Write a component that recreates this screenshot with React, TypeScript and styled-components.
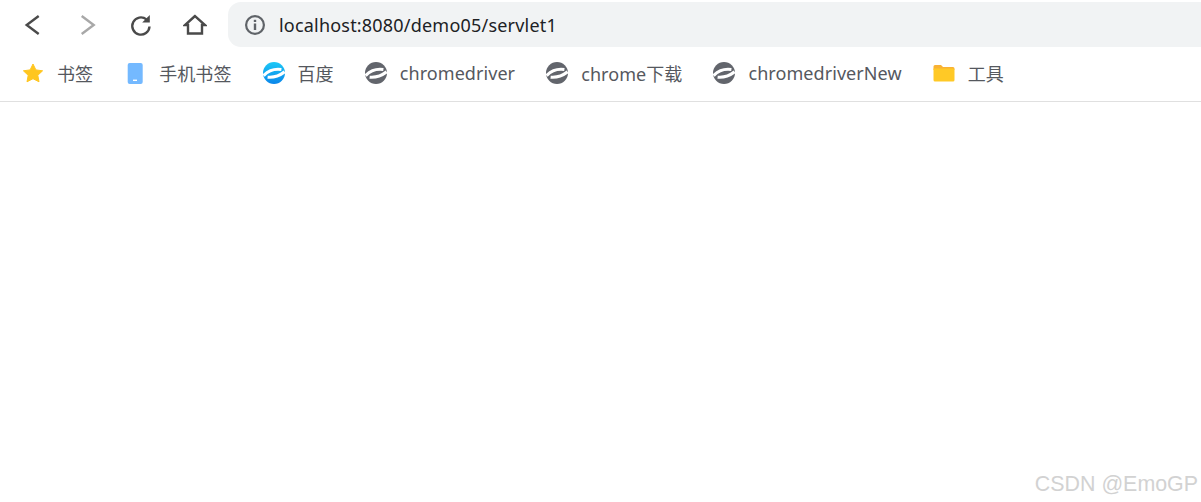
import {FC, ReactNode} from "react"
import styled, {createGlobalStyle} from "styled-components"

const GlobalStyle = createGlobalStyle`
  html, body {
    margin: 0;
    padding: 0;
    background: #fff;
  }
`

const Swoosh: FC<{ blue?: boolean }> = ({blue}) => {
	const id = "edge-blue"
	return <svg width="22" height="22" viewBox="0 0 22 22">
		{blue && <defs>
			<linearGradient id={id} x1="0" y1="0" x2="0" y2="1">
				<stop offset="0" stopColor="#1cc8f6"/>
				<stop offset="1" stopColor="#0a86ea"/>
			</linearGradient>
		</defs>}
		<circle cx="11" cy="11" r="11" fill={blue ? `url(#${id})` : "#62656c"}/>
		<path d="M0.6 13.6 C5 9 11 6.6 18.4 7.6" stroke="#fff" strokeWidth="3" fill="none"/>
		<path d="M21.6 9.8 C16.5 13.8 10.5 15.8 4.6 15.2" stroke="#fff" strokeWidth="3" fill="none"/>
	</svg>
}

const Star = () => <svg width="22" height="22" viewBox="0 0 22 22">
	<path d="M11 2 L13.9 7.9 L20.6 8.8 L15.8 13.3 L17 19.8 L11 16.7 L5 19.8 L6.2 13.3 L1.4 8.8 L8.1 7.9 Z"
		  fill="#ffc61f" stroke="#ffc61f" strokeWidth="1" strokeLinejoin="round"/>
</svg>

const Phone = () => <svg width="22" height="22" viewBox="0 0 22 22">
	<rect x="3.7" y="1" width="15" height="21" rx="2" fill="#74b9ff"/>
	<rect x="9" y="17.6" width="4" height="1.4" fill="#fff"/>
</svg>

const Folder = () => <svg width="22" height="22" viewBox="0 0 22 22">
	<path d="M0.5 4.5 Q0.5 3 2 3 H8 L10 5 H20 Q21.5 5 21.5 6.5 V8 H0.5 Z" fill="#f9b233"/>
	<path d="M0.5 6.5 H20 Q21.5 6.5 21.5 8 V18 Q21.5 19.5 20 19.5 H2 Q0.5 19.5 0.5 18 Z" fill="#ffc926"/>
</svg>

interface IBookmark {
	icon: ReactNode
	label: string
}

const bookmarks: IBookmark[] = [
	{icon: <Star/>, label: "书签"},
	{icon: <Phone/>, label: "手机书签"},
	{icon: <Swoosh blue/>, label: "百度"},
	{icon: <Swoosh/>, label: "chromedriver"},
	{icon: <Swoosh/>, label: "chrome下载"},
	{icon: <Swoosh/>, label: "chromedriverNew"},
	{icon: <Folder/>, label: "工具"},
]

const App: FC = () => {
	return <Page>
		<GlobalStyle/>
		<Toolbar>
			<NavButton>
				<svg width="24" height="24" viewBox="0 0 24 24"><path d="M17.7 3 L5.7 12 L17.7 21" /></svg>
			</NavButton>
			<NavButton $disabled>
				<svg width="24" height="24" viewBox="0 0 24 24"><path d="M6.7 3 L18.7 12 L6.7 21" /></svg>
			</NavButton>
			<NavButton>
				<svg width="24" height="24" viewBox="0 0 24 24">
					<path d="M20.5 13.5 A8.6 8.6 0 1 1 17.4 6.4"/>
					<path d="M20.8 2 V9.6 H13.2 Z" fill="#4a4a4a" stroke="none"/>
				</svg>
			</NavButton>
			<NavButton>
				<svg width="24" height="24" viewBox="0 0 24 24"><path d="M12 3 L2 12 H5 V20.5 H19 V12 H22 Z"/></svg>
			</NavButton>
			<AddressBar>
				<svg width="22" height="22" viewBox="0 0 22 22">
					<circle cx="11" cy="11" r="8.9" fill="none" stroke="#5f6368" strokeWidth="2.2"/>
					<rect x="9.8" y="9.5" width="2.4" height="6.5" fill="#5f6368"/>
					<rect x="9.8" y="5.8" width="2.4" height="2.2" fill="#5f6368"/>
				</svg>
				<Url>localhost:8080/demo05/servlet1</Url>
			</AddressBar>
		</Toolbar>
		<BookmarkBar>
			{bookmarks.map(b => <Bookmark key={b.label}>
				{b.icon}
				<span>{b.label}</span>
			</Bookmark>)}
		</BookmarkBar>
		<Watermark>CSDN @EmoGP</Watermark>
	</Page>
}
export default App

const Page = styled.div`
  position: relative;
  width: 1201px;
  height: 502px;
  overflow: hidden;
  background: #fff;
  font-family: "Noto Sans", "Noto Sans CJK SC", sans-serif;
`

const Toolbar = styled.div`
  display: flex;
  align-items: flex-start;
  height: 49px;
  padding: 2px 0 0 6px;
  box-sizing: border-box;
`

const NavButton = styled.div<{ $disabled?: boolean }>`
  width: 54px;
  height: 45px;
  flex-shrink: 0;
  display: flex;
  align-items: center;
  justify-content: center;

  svg {
    fill: none;
    stroke: ${p => p.$disabled ? "#a8a8a8" : "#4a4a4a"};
    stroke-width: 2.4;
  }
`

const AddressBar = styled.div`
  flex: 1;
  height: 45px;
  margin-left: 6px;
  padding-left: 16px;
  display: flex;
  align-items: center;
  gap: 13px;
  background: #f1f3f4;
  border-radius: 13px 0 0 13px;
`

const Url = styled.span`
  font-size: 18px;
  letter-spacing: 0.2px;
  color: #202124;
`

const BookmarkBar = styled.div`
  display: flex;
  align-items: center;
  gap: 31.1px;
  height: 48px;
  padding: 0 0 4px 22px;
  border-bottom: 1px solid #e0e0e0;
`

const Bookmark = styled.div`
  display: flex;
  align-items: center;
  gap: 13px;
  font-size: 18px;
  letter-spacing: 0.06px;
  color: #55585e;
  white-space: nowrap;
`

const Watermark = styled.div`
  position: absolute;
  right: 3px;
  bottom: 5px;
  font-family: "Liberation Sans", sans-serif;
  font-size: 21.4px;
  color: #d2d2d2;
`
